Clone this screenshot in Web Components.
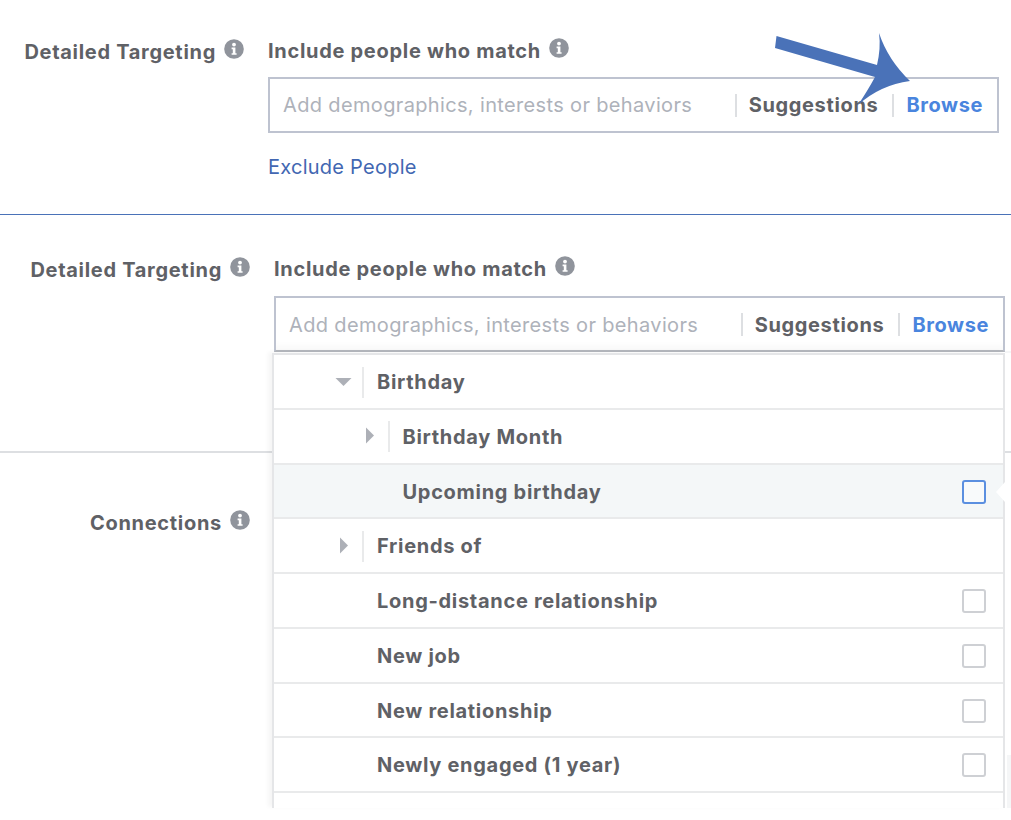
<!DOCTYPE html>
<html>
<head>
<meta charset="utf-8">
<title>Detailed Targeting</title>
<style>
  html, body { margin: 0; padding: 0; background: #fff; }
  body { height: 820px; overflow: hidden; position: relative; font-family: Inter, "Liberation Sans", sans-serif; }
</style>
</head>
<body>
<targeting-page></targeting-page>
<script>
class InfoIcon extends HTMLElement {
    connectedCallback() {
        this.attachShadow({ mode: 'open' });
        this.shadowRoot.innerHTML = `
            <style>
                :host { display: inline-block; width: 20px; height: 20px; flex: none; margin-bottom: 6px; }
                svg { display: block; }
            </style>
            <svg width="20" height="20" viewBox="0 0 20 20">
                <circle cx="10" cy="10" r="9.8" fill="#90949c"/>
                <circle cx="10" cy="5.6" r="1.9" fill="#fff"/>
                <path d="M7.6 8.6h3.8v5.6h1.2v1.6H7.6v-1.6h1.2v-4H7.6z" fill="#fff"/>
            </svg>
        `;
    }
}
customElements.define('info-icon', InfoIcon);

class SearchBox extends HTMLElement {
    connectedCallback() {
        this.attachShadow({ mode: 'open' });
        this.shadowRoot.innerHTML = `
            <style>
                :host { display: flex; align-items: center; box-sizing: border-box; height: 56px; border: 2px solid #bec3d0; background: #fff; font-size: 20px; letter-spacing: 0.35px; }
                :host([shade]) { padding-top: 1px; box-shadow: inset 0 -9px 8px -6px rgba(0,0,0,.035); border-bottom-color: #b4b7bd; }
                .hint { flex: 1; padding-left: 13px; color: #aeb2ba; font-weight: 400; white-space: nowrap; }
                .sep { width: 2px; height: 23px; background: #dddfe2; flex: none; }
                .sug { padding: 0 14px 0 12px; color: #5f6166; font-weight: 700; letter-spacing: 0.65px; }
                .browse { padding: 0 14px 0 12px; color: #4a85de; font-weight: 700; letter-spacing: 0.6px; }
            </style>
            <span class="hint">Add demographics, interests or behaviors</span>
            <span class="sep"></span>
            <span class="sug">Suggestions</span>
            <span class="sep"></span>
            <span class="browse">Browse</span>
        `;
    }
}
customElements.define('search-box', SearchBox);

class FieldRow extends HTMLElement {
    connectedCallback() {
        this.attachShadow({ mode: 'open' });
        this.shadowRoot.innerHTML = `
            <style>
                :host { display: flex; gap: 24px; font-size: 20px; font-weight: 700; color: #5f6166; letter-spacing: 0.7px; }
                .label { box-sizing: border-box; width: 244px; flex: none; display: flex; justify-content: flex-end; align-items: center; gap: 8px; height: 24px; white-space: nowrap; }
                .body { flex: none; width: 731px; }
            </style>
            <div class="label"><span>${this.getAttribute('label')}</span><info-icon></info-icon></div>
            <div class="body"><slot></slot></div>
        `;
    }
}
customElements.define('field-row', FieldRow);

class TargetField extends HTMLElement {
    connectedCallback() {
        const gap = this.getAttribute('gap') || '15';
        this.attachShadow({ mode: 'open' });
        this.shadowRoot.innerHTML = `
            <style>
                :host { display: block; }
                .head { display: flex; align-items: center; gap: 8px; height: 24px; margin-top: -1px; margin-bottom: ${gap}px; white-space: nowrap; }
            </style>
            <div class="head"><span>Include people who match</span><info-icon></info-icon></div>
            <search-box ${this.hasAttribute('shade') ? 'shade' : ''}></search-box>
            <slot></slot>
        `;
    }
}
customElements.define('target-field', TargetField);

class MenuRow extends HTMLElement {
    connectedCallback() {
        const depth = Number(this.getAttribute('depth') || 0);
        const caret = this.getAttribute('caret');
        let lead = '';
        if (caret === 'down') {
            lead = `<svg width="17" height="10" viewBox="0 0 17 10"><path d="M0.5 1h16l-8 8z" fill="#adb0b7"/></svg><i></i>`;
        } else if (caret === 'right') {
            lead = `<svg width="8" height="17" viewBox="0 0 8 17" style="margin:-2px 4px 0 0"><path d="M0 0.5l8 8-8 8z" fill="#adb0b7"/></svg><i></i>`;
        }
        this.attachShadow({ mode: 'open' });
        this.shadowRoot.innerHTML = `
            <style>
                :host { display: flex; align-items: center; box-sizing: border-box; height: 54.75px; padding-top: 1.4px; border-bottom: 2px solid #e9eaeb; font-size: 20px; font-weight: 700; color: #5f6166; letter-spacing: 0.7px; background: #fff; padding-right: 17px; position: relative; }
                :host([active]) { background: #f4f7f8; }
                .lead { box-sizing: border-box; flex: none; width: ${103 + depth * 25.5}px; display: flex; justify-content: flex-end; align-items: center; gap: 10px; padding-right: 13px; height: 31px; }
                .lead i { display: block; width: 2px; height: 31px; background: #e9eaeb; }
                .text { flex: 1; white-space: nowrap; }
                .check { box-sizing: border-box; width: 24px; height: 24px; border: 2px solid #ced0d4; border-radius: 3px; background: #fff; flex: none; }
                :host([active]) .check { border-color: #5b8fe0; background: #f8fafb; }
            </style>
            <div class="lead">${lead}</div>
            <span class="text"><slot></slot></span>
            ${this.hasAttribute('check') ? '<span class="check"></span>' : ''}
        `;
    }
}
customElements.define('menu-row', MenuRow);

class TargetMenu extends HTMLElement {
    connectedCallback() {
        this.attachShadow({ mode: 'open' });
        this.shadowRoot.innerHTML = `
            <style>
                :host { display: block; position: absolute; left: 272px; top: 353px; width: 733px; height: 455px; box-sizing: border-box; border: 2px solid #e5e6e8; border-bottom: 0; background: #fff; box-shadow: -4px -1px 4px rgba(0,0,0,.04); }
                .clip { height: 100%; overflow: hidden; }
                .notch { position: absolute; right: -2px; top: 127px; width: 0; height: 0; border-style: solid; border-width: 10px 9px 10px 0; border-color: transparent #fff transparent transparent; }
            </style>
            <div class="clip"><slot></slot></div>
            <div class="notch"></div>
        `;
    }
}
customElements.define('target-menu', TargetMenu);

class TargetingPage extends HTMLElement {
    connectedCallback() {
        this.attachShadow({ mode: 'open' });
        this.shadowRoot.innerHTML = `
            <style>
                :host { display: block; font-family: Inter, "Liberation Sans", sans-serif; }
                .first { box-sizing: border-box; height: 215px; padding-top: 40px; border-bottom: 1px solid #4a72b8; }
                .second { box-sizing: border-box; height: 238px; padding: 43.4px 0 0 6px; border-bottom: 2px solid #dddfe2; }
                .third { padding: 58px 0 0 6px; }
                a { display: block; margin-top: 22px; color: #4267b2; font-weight: 400; font-size: 20px; letter-spacing: 0.25px; line-height: 24px; text-decoration: none; }
                .edge { position: absolute; left: 1005px; width: 6px; background: #f5f6f7; }
                .arrow { position: absolute; left: 0; top: 0; pointer-events: none; }
            </style>
            <section class="first">
                <field-row label="Detailed Targeting">
                    <target-field gap="14.4"><a href="#">Exclude People</a></target-field>
                </field-row>
            </section>
            <section class="second">
                <field-row label="Detailed Targeting">
                    <target-field shade></target-field>
                </field-row>
            </section>
            <section class="third">
                <field-row label="Connections"></field-row>
            </section>
            <div class="edge" style="top:351px;height:2px"></div>
            <div class="edge" style="top:755px;height:53px;left:1007px;width:4px"></div>
            <target-menu>
                <menu-row caret="down">Birthday</menu-row>
                <menu-row depth="1" caret="right">Birthday Month</menu-row>
                <menu-row depth="1" active check>Upcoming birthday</menu-row>
                <menu-row caret="right">Friends of</menu-row>
                <menu-row check>Long-distance relationship</menu-row>
                <menu-row check>New job</menu-row>
                <menu-row check>New relationship</menu-row>
                <menu-row check>Newly engaged (1 year)</menu-row>
                <menu-row check></menu-row>
            </target-menu>
            <svg class="arrow" width="1011" height="120" viewBox="0 0 1011 120">
                <path d="M776.5 36L877 65Q881 48 879 33Q888 60 910 81Q880 85 858 105Q868 90 875 77L775 48Z" fill="#4a72b8"/>
            </svg>
        `;
    }
}
customElements.define('targeting-page', TargetingPage);
</script>
</body>
</html>
